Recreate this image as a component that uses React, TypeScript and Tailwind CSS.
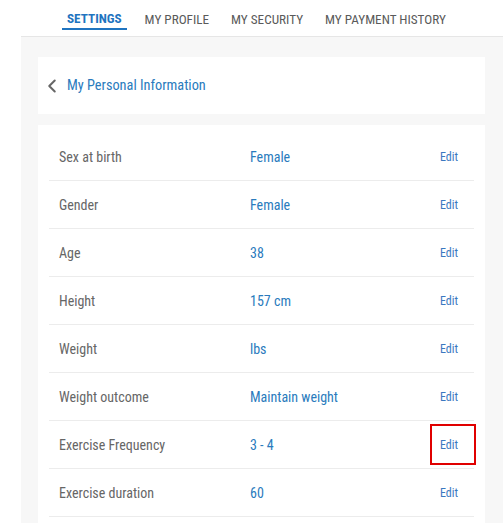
import { ChevronLeft } from "lucide-react";

const tabs = ["SETTINGS", "MY PROFILE", "MY SECURITY", "MY PAYMENT HISTORY"];

const rows = [
  { label: "Sex at birth", value: "Female" },
  { label: "Gender", value: "Female" },
  { label: "Age", value: "38" },
  { label: "Height", value: "157 cm" },
  { label: "Weight", value: "lbs" },
  { label: "Weight outcome", value: "Maintain weight" },
  { label: "Exercise Frequency", value: "3 - 4", highlight: true },
  { label: "Exercise duration", value: "60" },
];

export default function App() {
  return (
    <div className="h-[531px] bg-white font-['Roboto_Condensed','Liberation_Sans_Narrow',Roboto,sans-serif] overflow-hidden">
      {/* tab bar */}
      <nav className="h-[37px] ml-[21px] border-b border-[#e6e6e6] flex items-start pl-[41px] pt-[11px] gap-[22px]">
        {tabs.map((t, i) => (
          <div
            key={t}
            className={
              i === 0
                ? "px-[5px] pb-[2px] mr-[-4px] border-b-2 border-[#1f74c0] text-[#1f74c0] font-bold text-[13.2px] leading-[15px]"
                : "text-[#5a5a5a] text-[13.2px] leading-[15px] pt-[1px]"
            }
          >
            {t}
          </div>
        ))}
      </nav>

      {/* gray panel */}
      <div className="ml-[21px] h-[486px] bg-[#f7f7f7] pt-[20px] pl-[17px] pr-[18px] overflow-hidden">
        <div className="h-[57px] bg-white flex items-center pl-[3px] gap-[4px]">
          <ChevronLeft size={22} strokeWidth={2.2} className="text-[#666]" />
          <span className="text-[#2a7bbd] text-[14.3px]">My Personal Information</span>
        </div>

        <div className="mt-[11px] bg-white pt-[8px] pb-[20px] px-[11px]">
          {rows.map((r) => (
            <div
              key={r.label}
              className="h-[48px] border-b border-[#ececec] flex items-center pl-[10px] pr-[16px] pt-[1px] text-[14px]"
            >
              <span className="w-[191px] text-[#666]">{r.label}</span>
              <span className="flex-1 text-[#2a7bbd]">{r.value}</span>
              <span className="relative text-[12px] text-[#3a78c0]">
                Edit
                {r.highlight && (
                  <span className="absolute left-[-10px] right-[-18px] top-[-12px] bottom-[-11px] border-2 border-[#e00000]" />
                )}
              </span>
            </div>
          ))}
        </div>
      </div>
    </div>
  );
}
